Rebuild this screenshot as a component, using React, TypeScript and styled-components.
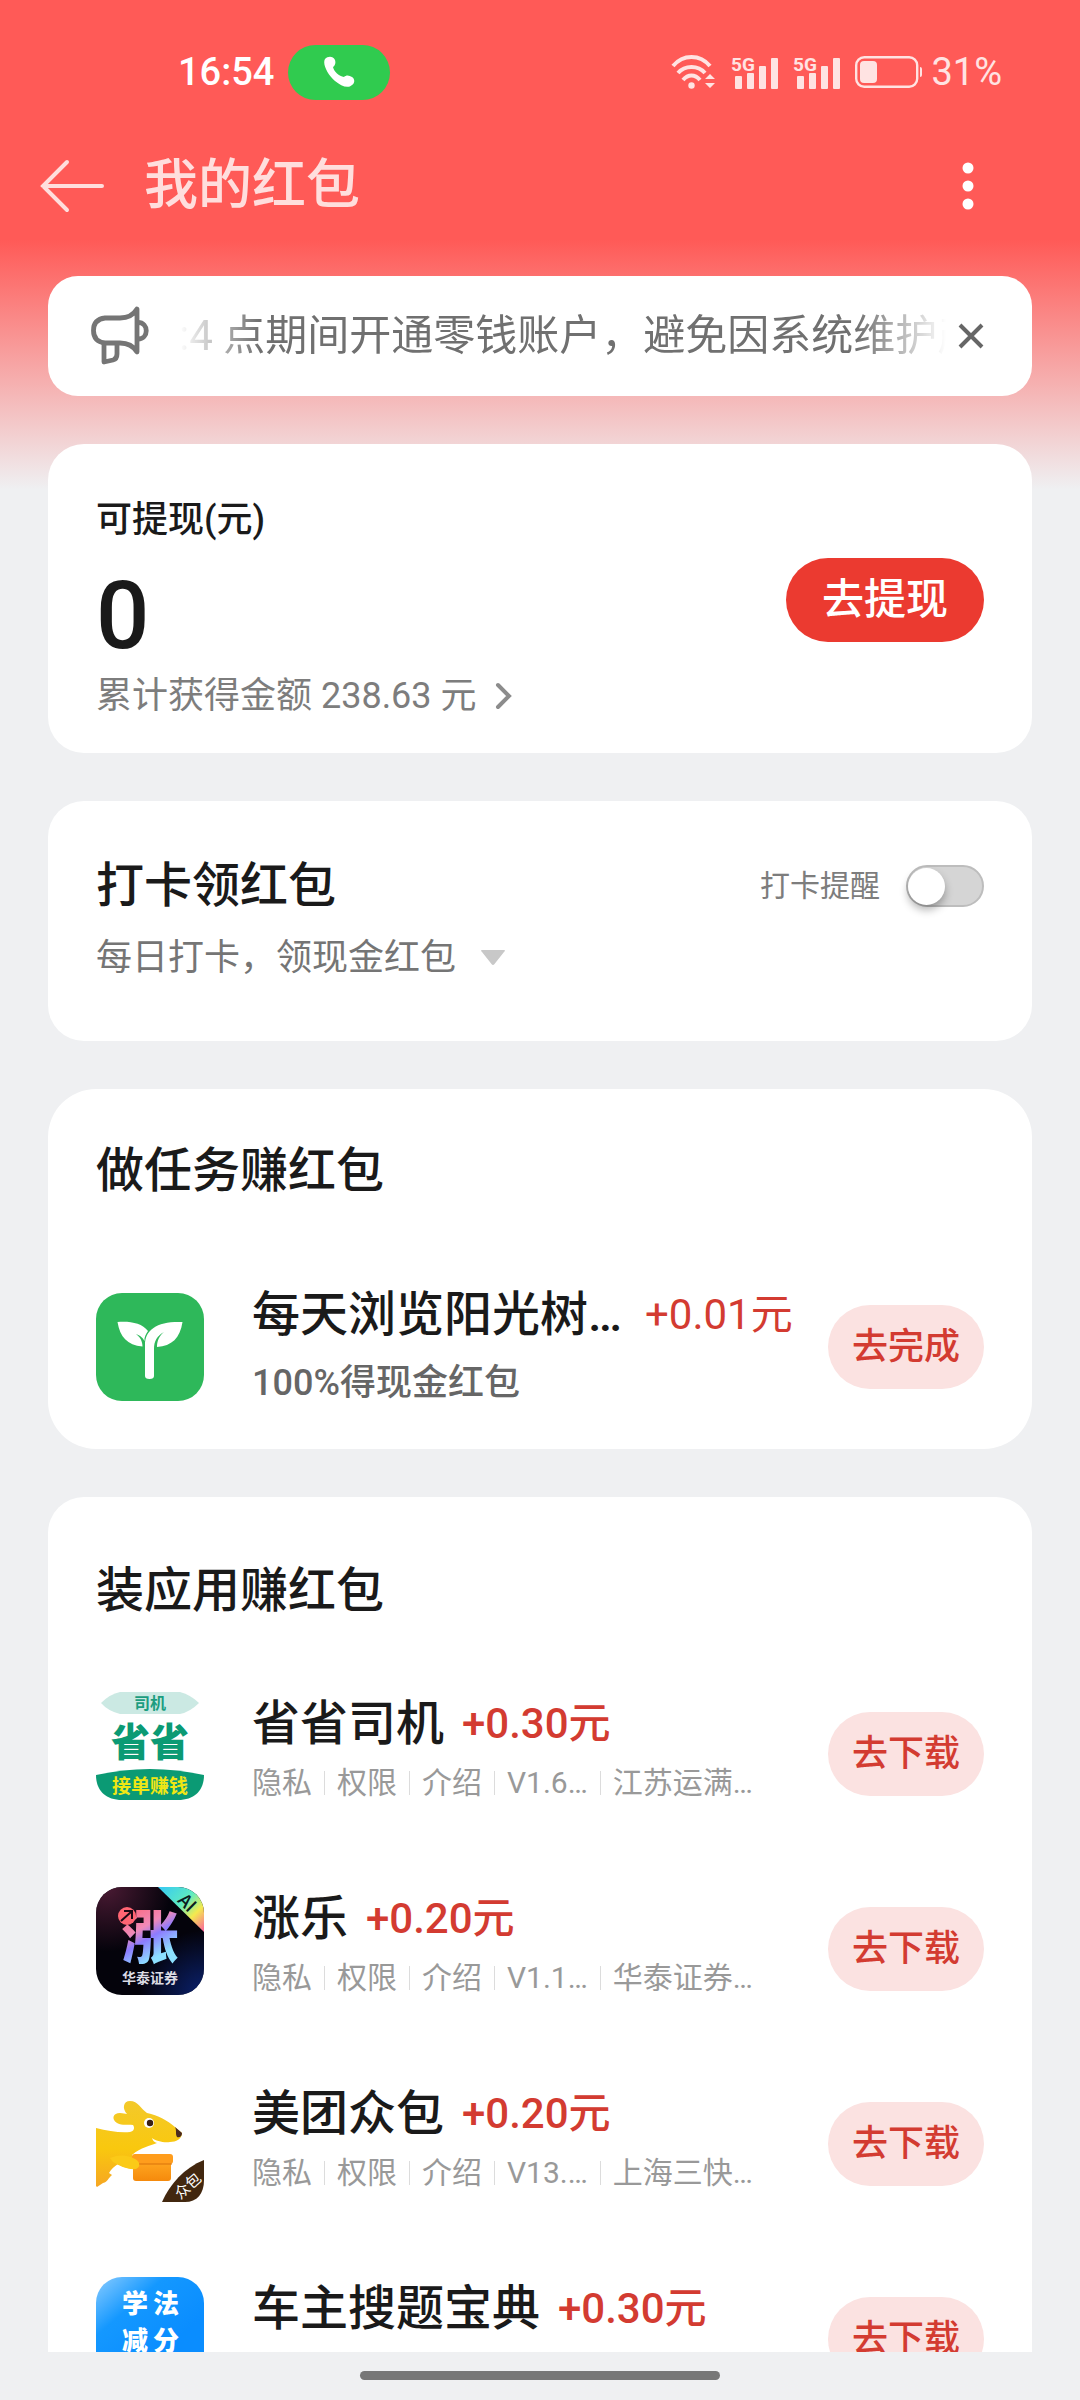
import React, { useState } from "react";
import styled, { createGlobalStyle, css } from "styled-components";

const fontStack = `Roboto, "Noto Sans CJK SC", sans-serif`;

const GlobalStyle = createGlobalStyle`
  * { box-sizing: border-box; }
  body { margin: 0; background: #eff0f2; font-family: ${fontStack}; color: #1a1a1a; }
  button, input { font-family: inherit; margin: 0; padding: 0; border: 0; }
  button { background: none; cursor: pointer; }
  h1, h2, h3, p, ul { margin: 0; padding: 0; }
  h1, h2, h3, p { font-weight: 500; }
  svg { display: block; flex: none; }
  svg text { font-family: "Noto Sans CJK SC", sans-serif; }
`;

const Screen = styled.div`
  display: flex;
  flex-direction: column;
  height: 100vh;
  background: linear-gradient(to bottom, #ff5a57 240px, #efeff1 488px, #eff0f2 489px);
`;

const StatusBar = styled.div`
  flex: none;
  display: flex;
  align-items: center;
  justify-content: space-between;
  height: 144px;
  padding: 0 78px 0 178px;
  color: #fff;
  font-size: 38px;
  line-height: 48px;
`;

const StatusGroup = styled.div<{ $gap: number }>`
  display: flex;
  align-items: center;
  gap: ${(p) => p.$gap}px;
`;

const Clock = styled.span`
  font-weight: 500;
`;

const CallPill = styled.div`
  display: flex;
  align-items: center;
  justify-content: center;
  width: 102px;
  height: 55px;
  border-radius: 28px;
  background: #30cb4f;
`;

const BatteryText = styled.span`
  color: #ffe3e2;
`;

const AppBar = styled.header`
  flex: none;
  display: flex;
  align-items: center;
  height: 84px;
  padding: 0 106px 0 40px;
`;

const IconButton = styled.button`
  display: flex;
  align-items: center;
  justify-content: center;
`;

const PageTitle = styled.h1`
  flex: 1;
  margin-left: 38px;
  color: #ffdedd;
  font-size: 54px;
  line-height: 80px;
`;

const Content = styled.main`
  flex: 1;
  min-height: 0;
  display: flex;
  flex-direction: column;
  gap: 48px;
  padding: 48px 48px 0;
  overflow-y: auto;
  scrollbar-width: none;
  > * { flex: none; }
`;

const Notice = styled.div`
  display: flex;
  align-items: center;
  height: 120px;
  padding: 0 48px 0 43px;
  border-radius: 30px;
  background: #fff;
`;

const NoticeText = styled.p`
  flex: 1;
  min-width: 0;
  margin: 0 12px 0 30px;
  overflow: hidden;
  white-space: nowrap;
  color: #707070;
  font-size: 42px;
  font-weight: 400;
  line-height: 60px;
  mask-image: linear-gradient(to right, transparent, #000 80px, #000 calc(100% - 90px), transparent);
`;

const Card = styled.section<{ $pad: string; $radius?: number }>`
  padding: ${(p) => p.$pad};
  border-radius: ${(p) => p.$radius ?? 36}px;
  background: #fff;
`;

const Spread = styled.div`
  display: flex;
  align-items: center;
  justify-content: space-between;
`;

const BalanceLabel = styled.h2`
  font-size: 36px;
  line-height: 68px;
`;

const Balance = styled.p`
  font-size: 94px;
  line-height: 124px;
`;

const TotalLink = styled.a`
  display: flex;
  align-items: center;
  gap: 18px;
  color: #7d7d7d;
  font-size: 36px;
  line-height: 36px;
  text-decoration: none;
`;

const WithdrawButton = styled.button`
  width: 198px;
  height: 84px;
  border-radius: 42px;
  background: #eb3a30;
  color: #fff;
  font-size: 42px;
  font-weight: 500;
  line-height: 84px;
`;

const SectionTitle = styled.h2`
  font-size: 48px;
  line-height: 60px;
`;

const ReminderLabel = styled.label`
  display: flex;
  align-items: center;
  gap: 26px;
  color: #7d7d7d;
  font-size: 30px;
  line-height: 42px;
`;

const Switch = styled.input`
  appearance: none;
  display: flex;
  align-items: center;
  width: 78px;
  height: 42px;
  border: 2px solid #bdbdbd;
  border-radius: 21px;
  background: #d5d5d5;
  cursor: pointer;
  &::before {
    content: "";
    width: 37px;
    height: 37px;
    border-radius: 50%;
    background: #fff;
    box-shadow: 0 5px 8px rgba(0, 0, 0, 0.3);
  }
  &:checked {
    justify-content: flex-end;
    background: #eb3a30;
    border-color: #eb3a30;
  }
`;

const ExpandButton = styled.button`
  display: flex;
  align-items: center;
  gap: 24px;
  margin-top: 18px;
  color: #757575;
  font-size: 36px;
  line-height: 48px;
`;

const List = styled.ul<{ $top: number }>`
  display: flex;
  flex-direction: column;
  gap: 71px;
  margin-top: ${(p) => p.$top}px;
  list-style: none;
`;

const Row = styled.li<{ $centered?: boolean }>`
  display: flex;
  align-items: ${(p) => (p.$centered ? "center" : "flex-start")};
  min-height: 124px;
`;

const Info = styled.div<{ $roomy?: boolean }>`
  flex: 1;
  min-width: 0;
  display: flex;
  flex-direction: column;
  gap: ${(p) => (p.$roomy ? 14 : 5)}px;
  padding: ${(p) => (p.$roomy ? "0 0 2px" : "2px 0 0")};
  margin-left: 48px;
`;

const NameLine = styled.div<{ $gap: number }>`
  display: flex;
  align-items: center;
  gap: ${(p) => p.$gap}px;
  white-space: nowrap;
`;

const Name = styled.h3`
  font-size: 48px;
  line-height: 60px;
`;

const Reward = styled.span<{ $light?: boolean }>`
  color: #d33b31;
  font-size: 42px;
  font-weight: ${(p) => (p.$light ? 400 : 500)};
  line-height: 60px;
`;

const TaskNote = styled.p`
  color: #666;
  font-size: 36px;
  line-height: 48px;
`;

const metaItem = css`
  padding: 0 12px;
  color: #999;
  line-height: 24px;
  text-decoration: none;
  border-left: 1px solid #dcdcdc;
  &:first-child { padding-left: 0; border-left: 0; }
`;

const Meta = styled.div`
  display: flex;
  align-items: center;
  height: 48px;
  font-size: 30px;
  font-weight: 400;
  white-space: nowrap;
`;

const MetaLink = styled.a`${metaItem}`;
const MetaText = styled.span`${metaItem}`;

const ActionButton = styled.button`
  flex: none;
  align-self: flex-start;
  width: 156px;
  height: 84px;
  margin-top: 20px;
  border-radius: 42px;
  background: #fbe2e1;
  color: #d33b31;
  font-size: 36px;
  font-weight: 500;
  line-height: 84px;
`;

const NavBar = styled.footer`
  flex: none;
  display: flex;
  align-items: center;
  justify-content: center;
  height: 48px;
  padding-bottom: 2px;
  background: #eff0f2;
`;

const HomeHandle = styled.div`
  width: 360px;
  height: 9px;
  border-radius: 5px;
  background: #777;
`;

const PhoneIcon = () => (
  <svg width="32" height="32" viewBox="0 0 32 32">
    <path
      d="M2 3C5 0 10 0 12 4C13 7 12 10 10 11C11 16 16 20 21 21C23 19 26 19 29 21C32 23 32 27 29 29C25 33 18 30 12 25C5 19 -1 8 2 3Z"
      fill="#fff"
    />
  </svg>
);

const WifiIcon = () => (
  <svg width="45" height="36" viewBox="0 0 45 36" fill="none" stroke="#ffe3e2" strokeWidth="4">
    <path d="M2 12C12 0 29 0 39 12" />
    <path d="M7 19C14 11 27 11 34 19" />
    <path d="M12 26C17 20 24 20 29 26" />
    <circle cx="20.500" cy="31.500" r="3.200" fill="#ffe3e2" stroke="none" />
    <path d="M34 25L39 20L44 25ZM34 29L39 34L44 29Z" fill="#ffe3e2" stroke="none" />
  </svg>
);

const SignalLabel = styled.text`
  && { font-family: Roboto, sans-serif; }
  font-size: 19px;
  font-weight: 700;
`;

const SignalIcon = () => (
  <svg width="47" height="36" viewBox="0 0 47 36" fill="#ffe3e2">
    <SignalLabel x="0" y="17">5G</SignalLabel>
    <rect x="4" y="22" width="7" height="13" rx="1" />
    <rect x="16" y="19" width="7" height="16" rx="1" />
    <rect x="28" y="12" width="7" height="23" rx="1" />
    <rect x="40" y="4" width="7" height="31" rx="1" />
  </svg>
);

const BatteryIcon = () => (
  <svg width="68" height="32" viewBox="0 0 68 32" fill="none">
    <rect x="1.200" y="1.200" width="61" height="29.500" rx="8" stroke="#ffe3e2" strokeWidth="2.400" />
    <rect x="5" y="5" width="17" height="22" rx="4" fill="#ffe3e2" />
    <path d="M65 11Q67 11 67 13V19Q67 21 65 21Z" fill="#ffe3e2" />
  </svg>
);

const BackIcon = () => (
  <svg width="66" height="54" viewBox="0 0 66 54" fill="none" stroke="#ffdedd" strokeWidth="4" strokeLinecap="round">
    <path d="M27 3L3 27L27 51M3 27H62" />
  </svg>
);

const MoreIcon = () => (
  <svg width="12" height="50" viewBox="0 0 12 50" fill="#fff">
    <circle cx="6" cy="7" r="5.500" />
    <circle cx="6" cy="25" r="5.500" />
    <circle cx="6" cy="43" r="5.500" />
  </svg>
);

const HornIcon = () => (
  <svg width="58" height="60" viewBox="0 0 58 60" fill="none" stroke="#757575" strokeWidth="4.800" strokeLinejoin="round">
    <path d="M14 12H29C38 12 43 8 46 3V46C43 41 38 37 29 37H14C6 36 2.500 31 2.500 24.500C2.500 18 6 13 14 12Z" />
    <path d="M47 16.500C58 16.500 58 33 47 33" />
    <path d="M13 37V56L22 54Q26 53 26 48V37" />
  </svg>
);

const CloseIcon = () => (
  <svg width="26" height="26" viewBox="0 0 26 26" fill="none" stroke="#666" strokeWidth="4">
    <path d="M2 2L24 24M24 2L2 24" />
  </svg>
);

const ChevronIcon = () => (
  <svg width="18" height="28" viewBox="0 0 18 28" fill="none" stroke="#8c8c8c" strokeWidth="4" strokeLinecap="round">
    <path d="M3 3L14 14L3 25" />
  </svg>
);

const DownIcon = () => (
  <svg width="26" height="18" viewBox="0 0 26 18">
    <path d="M2 1H24Q26 1 24 3L14.500 15Q13 17 11.500 15L2 3Q0 1 2 1Z" fill="#c8c8c8" />
  </svg>
);

const SproutLogo = () => (
  <svg width="108" height="108" viewBox="0 0 108 108">
    <rect width="108" height="108" rx="26" fill="#2eb85a" />
    <g fill="#fff">
      <path d="M21.500 29C24 44 31 52 46.500 53.500C46.500 48 44 44 40 41C45 43 47 45 48.500 48C48 44 50 41 52 38C46 30 34 28 21.500 29Z" />
      <path d="M49 83V52C49 36 62 28 86.500 29C84 45 76 53 61 54C61 48 63 43 68 39C61 43 58 48 58 56V83Q58 86 53.500 86Q49 86 49 83Z" />
    </g>
  </svg>
);

const DriverLogo = () => (
  <svg width="108" height="108" viewBox="0 0 108 108" textAnchor="middle">
    <path d="M5 11Q14 2 24 0H84Q95 3 103 11Q94 20 84 22H24Q12 19 5 11Z" fill="#cbe9e3" />
    <text x="54" y="17" fontSize="16" fontWeight="700" fill="#1c9d80">司机</text>
    <text x="54" y="64" fontSize="39" fontWeight="900" fill="#0b9a74">省省</text>
    <path d="M0 83Q54 71 108 83C108 98 99 108 82 108H26C9 108 0 98 0 83Z" fill="#0b9a74" />
    <text x="54" y="101" fontSize="19" fontWeight="700" fill="#f0e614">接单赚钱</text>
  </svg>
);

const ZhangLogo = () => (
  <svg width="108" height="108" viewBox="0 0 108 108" textAnchor="middle">
    <defs>
      <clipPath id="zl-clip"><rect width="108" height="108" rx="26" /></clipPath>
      <radialGradient id="zl-red" cx="0.1" cy="0" r="0.6">
        <stop offset="0" stopColor="#4a1a33" />
        <stop offset="1" stopColor="#4a1a33" stopOpacity="0" />
      </radialGradient>
      <radialGradient id="zl-blue" cx="1" cy="1" r="0.6">
        <stop offset="0" stopColor="#0b2270" />
        <stop offset="1" stopColor="#0b2270" stopOpacity="0" />
      </radialGradient>
      <linearGradient id="zl-ribbon" x1="0" y1="0" x2="1" y2="1">
        <stop offset="0" stopColor="#35c8f5" />
        <stop offset="0.45" stopColor="#5fecc0" />
        <stop offset="0.7" stopColor="#f4ea4e" />
        <stop offset="1" stopColor="#fa5fa0" />
      </linearGradient>
      <linearGradient id="zl-char" x1="0" y1="0" x2="0.4" y2="1">
        <stop offset="0.15" stopColor="#ff5f6e" />
        <stop offset="0.5" stopColor="#f08ab8" />
        <stop offset="0.65" stopColor="#8d7bff" />
        <stop offset="0.9" stopColor="#8ce0ff" />
      </linearGradient>
    </defs>
    <g clipPath="url(#zl-clip)">
      <rect width="108" height="108" fill="#04030b" />
      <rect width="108" height="108" fill="url(#zl-red)" />
      <rect width="108" height="108" fill="url(#zl-blue)" />
      <path d="M62 0H108V45Z" fill="url(#zl-ribbon)" />
    </g>
    <text x="0" y="6" transform="translate(91 16) rotate(45)" fontSize="18" fontWeight="500" fill="#0a1a20">AI</text>
    <text x="54" y="71" fontSize="57" fontWeight="900" fill="url(#zl-char)">涨</text>
    <circle cx="31" cy="29" r="9" fill="#ff6573" />
    <path d="M25 34L35 25M28 24H36V32" fill="none" stroke="#1a0814" strokeWidth="2" />
    <text x="54" y="96" fontSize="14" fontWeight="700" fill="#dcdce4">华泰证券</text>
  </svg>
);

const KangarooLogo = () => (
  <svg width="108" height="120" viewBox="0 0 108 120" textAnchor="middle">
    <defs>
      <linearGradient id="kg-body" x1="0" y1="0" x2="0" y2="1">
        <stop offset="0" stopColor="#f3c92b" />
        <stop offset="0.55" stopColor="#f9c80e" />
        <stop offset="1" stopColor="#f6a623" />
      </linearGradient>
      <linearGradient id="kg-box" x1="0" y1="0" x2="0" y2="1">
        <stop offset="0" stopColor="#ffa51f" />
        <stop offset="1" stopColor="#f58a0c" />
      </linearGradient>
    </defs>
    <path
      d="M0 46C12 49 24 51 34 50C38 49 39 46 37 43C31 42 27 44 21 41C15 37 17 31 24 31C27 31 29 32 31 32C26 27 27 19 34 19C42 19 45 27 51 31C62 33 72 39 79 45L86 51C86 57 80 60 74 60C68 61 60 59 56 56C57 59 58 60 61 61C54 64 45 65 36 73C38 77 41 79 44 82C44 86 41 88 37 87C31 86 26 85 22 82C19 84 15 87 13 91L16 93C12 96 12 100 7 101L1 105L0 104Z"
      fill="url(#kg-body)"
    />
    <path d="M79 45L86 51C86 55 83 56 81 55C79 52 81 49 79 45Z" fill="#4a2a20" />
    <circle cx="53" cy="41" r="5" fill="#fff" />
    <circle cx="54" cy="41" r="3.200" fill="#3a2015" />
    <path d="M37 81H75V96Q75 99 72 99H40Q37 99 37 96Z" fill="url(#kg-box)" />
    <rect x="36" y="72" width="41" height="10" rx="3" fill="#ff9d1c" />
    <path d="M40 82H76" stroke="#d9730a" strokeWidth="1" />
    <path d="M14 76C24 72 32 73 39 77C44 79 45 85 40 87C32 88 24 84 17 80Z" fill="#fbca17" />
    <path d="M108 78V98C108 112 101 120 89 120H66C74 102 88 86 108 78Z" fill="#42270f" />
    <text x="0" y="5" transform="translate(92 104) rotate(-42)" fontSize="15" fill="#fff">众包</text>
  </svg>
);

const ExamLogo = () => (
  <svg width="108" height="108" viewBox="0 0 108 108" textAnchor="middle">
    <defs>
      <linearGradient id="ex-bg" x1="0" y1="0" x2="0.6" y2="0.7">
        <stop offset="0" stopColor="#8accff" />
        <stop offset="0.45" stopColor="#1498ff" />
        <stop offset="1" stopColor="#0a8dff" />
      </linearGradient>
    </defs>
    <rect width="108" height="108" rx="26" fill="url(#ex-bg)" />
    <g fontSize="26" fontWeight="900" fill="#fff">
      <text x="39" y="36">学</text>
      <text x="70" y="36">法</text>
      <text x="39" y="73">减</text>
      <text x="70" y="73">分</text>
    </g>
  </svg>
);

type AppEntry = {
  name: string;
  reward: string;
  Logo: () => React.ReactElement;
  version?: string;
  vendor?: string;
};

const apps: AppEntry[] = [
  { name: "省省司机", reward: "+0.30元", Logo: DriverLogo, version: "V1.6…", vendor: "江苏运满…" },
  { name: "涨乐", reward: "+0.20元", Logo: ZhangLogo, version: "V1.1…", vendor: "华泰证券…" },
  { name: "美团众包", reward: "+0.20元", Logo: KangarooLogo, version: "V13.…", vendor: "上海三快…" },
  { name: "车主搜题宝典", reward: "+0.30元", Logo: ExamLogo },
];

export default function App() {
  const [noticeOpen, setNoticeOpen] = useState(true);
  const [reminder, setReminder] = useState(false);

  return (
    <Screen>
      <GlobalStyle />
      <StatusBar>
        <StatusGroup $gap={14}>
          <Clock>16:54</Clock>
          <CallPill><PhoneIcon /></CallPill>
        </StatusGroup>
        <StatusGroup $gap={15}>
          <WifiIcon />
          <SignalIcon />
          <SignalIcon />
          <StatusGroup $gap={8}>
            <BatteryIcon />
            <BatteryText>31%</BatteryText>
          </StatusGroup>
        </StatusGroup>
      </StatusBar>
      <AppBar>
        <IconButton type="button" aria-label="返回"><BackIcon /></IconButton>
        <PageTitle>我的红包</PageTitle>
        <IconButton type="button" aria-label="更多"><MoreIcon /></IconButton>
      </AppBar>
      <Content>
        {noticeOpen && (
          <Notice>
            <HornIcon />
            <NoticeText>:4 点期间开通零钱账户，避免因系统维护产</NoticeText>
            <IconButton type="button" aria-label="关闭" onClick={() => setNoticeOpen(false)}>
              <CloseIcon />
            </IconButton>
          </Notice>
        )}

        <Card $pad="42px 48px 39px">
          <Spread>
            <div>
              <BalanceLabel>可提现(元)</BalanceLabel>
              <Balance>0</Balance>
              <TotalLink href="#total">
                累计获得金额 238.63 元
                <ChevronIcon />
              </TotalLink>
            </div>
            <WithdrawButton type="button">去提现</WithdrawButton>
          </Spread>
        </Card>

        <Card $pad="55px 48px 59px">
          <Spread>
            <SectionTitle>打卡领红包</SectionTitle>
            <ReminderLabel htmlFor="reminder">
              打卡提醒
              <Switch
                id="reminder"
                type="checkbox"
                checked={reminder}
                onChange={(e) => setReminder(e.target.checked)}
              />
            </ReminderLabel>
          </Spread>
          <ExpandButton type="button">
            每日打卡，领现金红包
            <DownIcon />
          </ExpandButton>
        </Card>

        <Card $pad="52px 48px 40px" $radius={48}>
          <SectionTitle>做任务赚红包</SectionTitle>
          <List $top={84}>
            <Row $centered>
              <SproutLogo />
              <Info $roomy>
                <NameLine $gap={23}>
                  <Name>每天浏览阳光树…</Name>
                  <Reward $light>+0.01元</Reward>
                </NameLine>
                <TaskNote>100%得现金红包</TaskNote>
              </Info>
              <ActionButton type="button">去完成</ActionButton>
            </Row>
          </List>
        </Card>

        <Card $pad="64px 48px 48px">
          <SectionTitle>装应用赚红包</SectionTitle>
          <List $top={71}>
            {apps.map(({ name, reward, Logo, version, vendor }) => (
              <Row key={name}>
                <Logo />
                <Info>
                  <NameLine $gap={18}>
                    <Name>{name}</Name>
                    <Reward>{reward}</Reward>
                  </NameLine>
                  {version && (
                    <Meta>
                      <MetaLink href="#privacy">隐私</MetaLink>
                      <MetaLink href="#permissions">权限</MetaLink>
                      <MetaLink href="#about">介绍</MetaLink>
                      <MetaText>{version}</MetaText>
                      <MetaText>{vendor}</MetaText>
                    </Meta>
                  )}
                </Info>
                <ActionButton type="button">去下载</ActionButton>
              </Row>
            ))}
          </List>
        </Card>
      </Content>
      <NavBar><HomeHandle /></NavBar>
    </Screen>
  );
}
